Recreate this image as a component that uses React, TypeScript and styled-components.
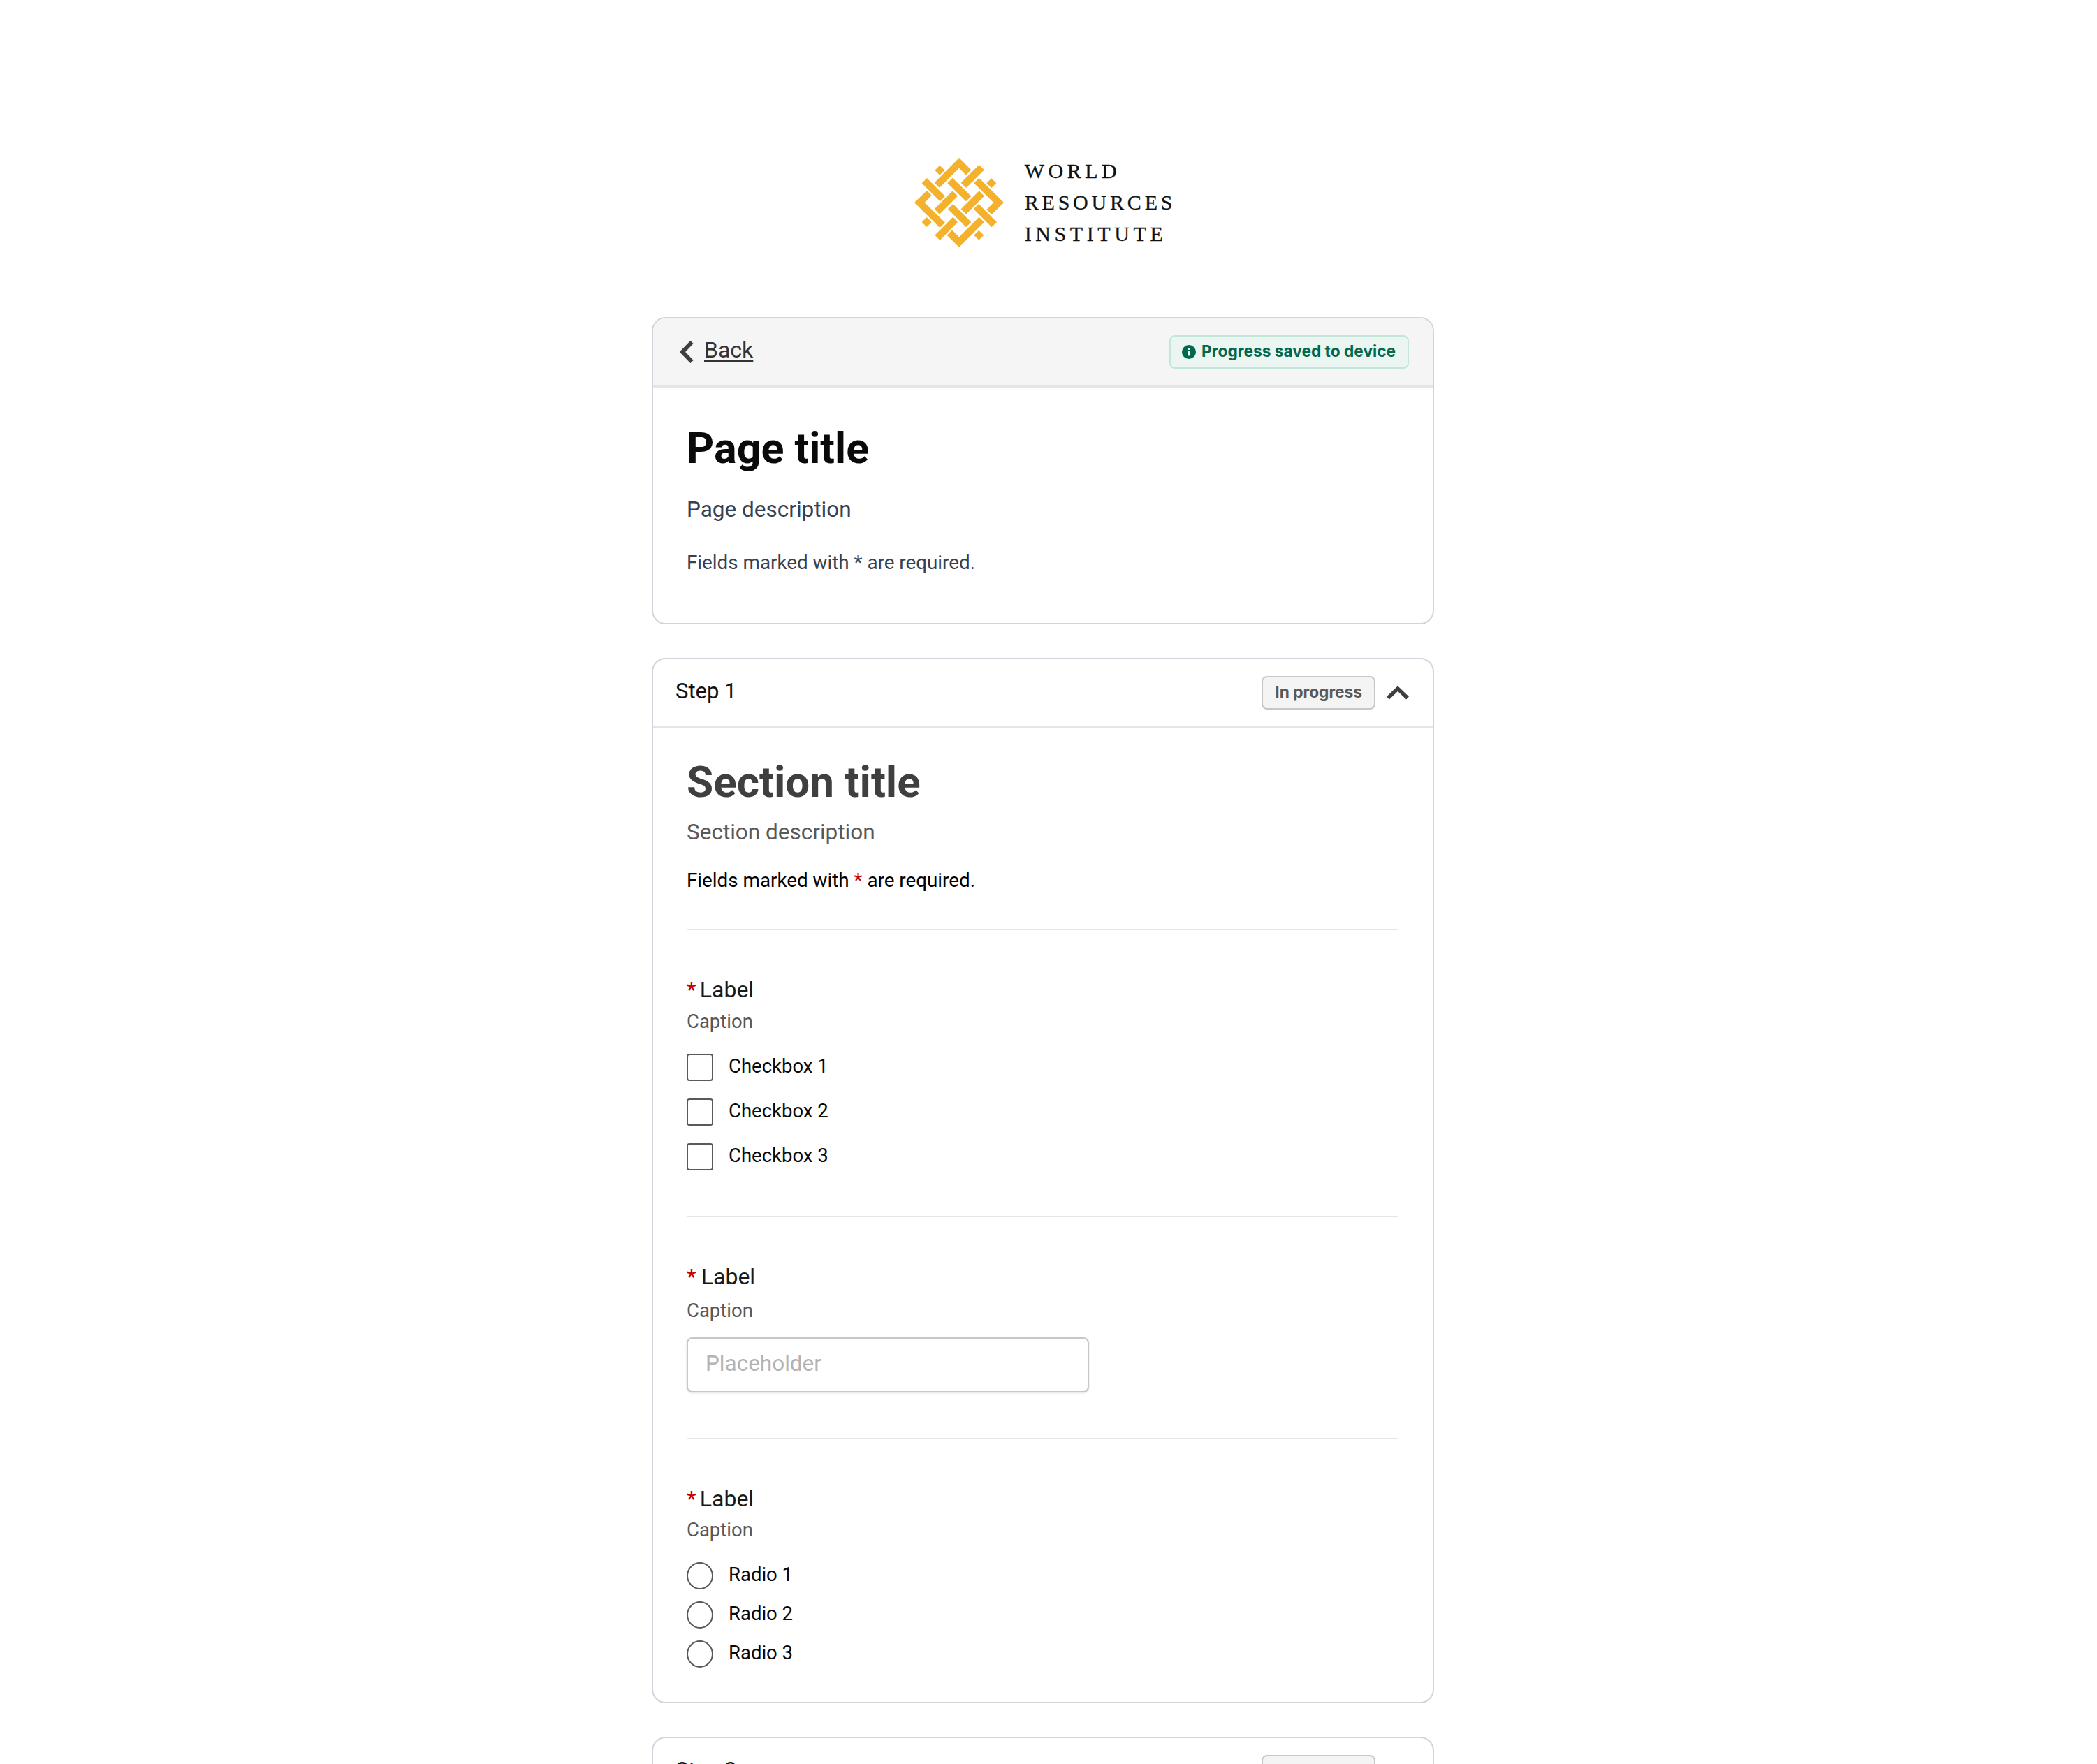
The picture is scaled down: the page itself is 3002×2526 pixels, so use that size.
import { JSX } from 'react';
import styled, { createGlobalStyle } from 'styled-components';

const GlobalStyle = createGlobalStyle`
  html, body {
    margin: 0;
    padding: 0;
    background: #fff;
    overflow: hidden;
  }
  * { box-sizing: border-box; }
`;

const LOGO_SHAPES = [
  '104,125 210,18 262,70 240,92 210,62 126,146',
  '106,72 127,50 148,71 127,92',
  '218,125 296,48 318,70 240,147',
  '328,127 349,106 370,127 349,148',
  '50,127 72,105 150,183 128,205',
  '160,127 182,104 262,183 240,205',
  '274,127 296,104 402,210 350,262 328,240 358,210',
  '104,238 182,160 204,182 126,260',
  '218,238 296,160 318,182 240,260',
  '18,210 72,158 92,180 62,210 150,296 127,318',
  '162,238 184,216 262,294 240,316',
  '272,238 294,216 372,294 350,316',
  '50,294 71,273 92,294 71,315',
  '106,350 184,272 204,294 128,372',
  '158,350 180,328 210,358 296,272 318,294 210,402',
  '274,350 295,329 316,350 295,371',
];

function LogoMark(): JSX.Element {
  return (
    <svg width="140" height="140" viewBox="0 0 420 420">
      {LOGO_SHAPES.map((points) => (
        <polygon key={points} points={points} fill="#f4b12b" />
      ))}
    </svg>
  );
}

function BackIcon(): JSX.Element {
  return (
    <svg width="20" height="32" viewBox="0 0 20 32">
      <polyline points="17.5,2 4,16 17.5,30" fill="none" stroke="#3f3f3f" strokeWidth="6" />
    </svg>
  );
}

function CollapseIcon(): JSX.Element {
  return (
    <svg width="32" height="20" viewBox="0 0 32 20">
      <polyline points="2,17.5 16,4 30,17.5" fill="none" stroke="#3f3f3f" strokeWidth="5.5" />
    </svg>
  );
}

function InfoIcon(): JSX.Element {
  return (
    <svg width="20" height="20" viewBox="0 0 20 20">
      <circle cx="10" cy="10" r="10" fill="#00694e" />
      <rect x="8.6" y="4.4" width="2.8" height="2.6" fill="#fff" />
      <rect x="8.6" y="8.4" width="2.8" height="7" fill="#fff" />
    </svg>
  );
}

interface StepProps {
  name: string;
  children?: React.ReactNode;
}

function Step({ name, children }: StepProps): JSX.Element {
  return (
    <Card>
      <StepHeader>
        <StepName>{name}</StepName>
        <StatusPill>In progress</StatusPill>
        <CollapseIcon />
      </StepHeader>
      {children}
    </Card>
  );
}

export default function App(): JSX.Element {
  return (
    <Page>
      <GlobalStyle />
      <Logo>
        <LogoMark />
        <LogoText>
          <LogoLine $spacing={5.5}>WORLD</LogoLine>
          <LogoLine $spacing={4.8}>RESOURCES</LogoLine>
          <LogoLine $spacing={5.6}>INSTITUTE</LogoLine>
        </LogoText>
      </Logo>

      <Card>
        <TopBar>
          <BackLink>
            <BackIcon />
            <u>Back</u>
          </BackLink>
          <SavedPill>
            <InfoIcon />
            <PillText>Progress saved to device</PillText>
          </SavedPill>
        </TopBar>
        <Intro>
          <PageTitle>Page title</PageTitle>
          <PageDescription>Page description</PageDescription>
          <RequiredNote>Fields marked with * are required.</RequiredNote>
        </Intro>
      </Card>

      <Step name="Step 1">
        <SectionBody>
          <SectionTitle>Section title</SectionTitle>
          <SectionDescription>Section description</SectionDescription>
          <SectionNote>
            Fields marked with <Star>*</Star> are required.
          </SectionNote>
          <Divider $top={51} />

          <FieldLabel $top={65}>
            <Star>*</Star>
            <LabelText>Label</LabelText>
          </FieldLabel>
          <Caption $top={8}>Caption</Caption>
          <OptionList $gap={25}>
            {['Checkbox 1', 'Checkbox 2', 'Checkbox 3'].map((option) => (
              <Option key={option}>
                <CheckBox type="checkbox" />
                <OptionText>{option}</OptionText>
              </Option>
            ))}
          </OptionList>
          <Divider $top={65} />

          <FieldLabel $top={65}>
            <Star>*</Star>
            <LabelText $wide>Label</LabelText>
          </FieldLabel>
          <Caption $top={11}>Caption</Caption>
          <TextField placeholder="Placeholder" />
          <Divider $top={65} />

          <FieldLabel $top={65}>
            <Star>*</Star>
            <LabelText>Label</LabelText>
          </FieldLabel>
          <Caption $top={7}>Caption</Caption>
          <OptionList $gap={17}>
            {['Radio 1', 'Radio 2', 'Radio 3'].map((option) => (
              <Option key={option}>
                <RadioButton type="radio" name="radio" />
                <OptionText>{option}</OptionText>
              </Option>
            ))}
          </OptionList>
        </SectionBody>
      </Step>

      <Step name="Step 2" />
    </Page>
  );
}

const Page = styled.div`
  width: 1120px;
  margin: 0 auto;
  position: relative;
  left: -8px;
  padding-top: 220px;
  height: 2526px;
  overflow: hidden;
  display: flex;
  flex-direction: column;
  gap: 48px;
  font-family: Roboto, sans-serif;
  color: #000;
`;

const Logo = styled.div`
  display: flex;
  align-items: center;
  justify-content: center;
  gap: 24px;
  height: 140px;
  margin-bottom: 46px;
`;

const LogoText = styled.div`
  display: flex;
  flex-direction: column;
  font-family: 'Liberation Serif', serif;
  font-size: 30px;
  line-height: 45px;
  color: #111;
  margin-bottom: 2px;
  -webkit-text-stroke: 0.3px #111;
`;

const LogoLine = styled.span<{ $spacing: number }>`
  letter-spacing: ${({ $spacing }) => $spacing}px;
`;

const Card = styled.section`
  flex: none;
  border: 2px solid #d1d5db;
  border-radius: 20px;
  overflow: hidden;
  background: #fff;
`;

const TopBar = styled.div`
  height: 100px;
  display: flex;
  align-items: center;
  justify-content: space-between;
  padding: 0 34px 0 38px;
  background: #f5f5f5;
  border-bottom: 4px solid #e5e5e5;
`;

const BackLink = styled.a`
  display: flex;
  align-items: center;
  gap: 15px;
  font-size: 32px;
  line-height: 40px;
  color: #333;
  u {
    position: relative;
    top: -3px;
    text-underline-offset: 3px;
  }
`;

const SavedPill = styled.div`
  height: 48px;
  display: flex;
  align-items: center;
  gap: 8px;
  padding: 0 17px 0 16px;
  background: #ebf5f1;
  border: 2px solid #c4e5da;
  border-radius: 8px;
  font-family: Inter, sans-serif;
  font-weight: 700;
  font-size: 22.7px;
  color: #00694e;
`;

const PillText = styled.span`
  padding-bottom: 3px;
`;

const Intro = styled.div`
  padding: 50px 50px 68px 48px;
`;

const PageTitle = styled.h1`
  margin: 0;
  font-size: 61px;
  line-height: 72px;
  font-weight: 700;
  color: #0a0a0a;
`;

const PageDescription = styled.p`
  margin: 32px 0 0;
  font-size: 31.5px;
  line-height: 40px;
  color: #374151;
`;

const RequiredNote = styled.p`
  margin: 38px 0 0;
  font-size: 27.8px;
  line-height: 36px;
  color: #374151;
`;

const StepHeader = styled.div`
  height: 98px;
  display: flex;
  align-items: center;
  padding: 0 34px 0 32px;
  border-bottom: 2px solid #e5e5e5;
`;

const StepName = styled.span`
  flex: 1;
  font-size: 31px;
  line-height: 40px;
  color: #111;
  position: relative;
  top: -2px;
`;

const StatusPill = styled.span`
  height: 48px;
  display: flex;
  align-items: center;
  margin-right: 16px;
  padding: 0 17px 3px;
  background: #f4f4f4;
  border: 2px solid #c7c7c7;
  border-radius: 8px;
  font-family: Inter, sans-serif;
  font-weight: 700;
  font-size: 22.7px;
  color: #595959;
`;

const SectionBody = styled.div`
  padding: 42px 50px 49px 48px;
  display: flex;
  flex-direction: column;
  align-items: flex-start;
`;

const SectionTitle = styled.h2`
  margin: 0;
  font-size: 62px;
  line-height: 72px;
  font-weight: 700;
  color: #3f3f3f;
`;

const SectionDescription = styled.p`
  margin: 16px 0 0;
  font-size: 31.5px;
  line-height: 40px;
  color: #595959;
`;

const SectionNote = styled.p`
  margin: 31px 0 0;
  font-size: 27.8px;
  line-height: 36px;
  color: #000;
`;

const Star = styled.span`
  color: #c70000;
`;

const Divider = styled.hr<{ $top: number }>`
  width: 100%;
  height: 2px;
  margin: ${({ $top }) => $top}px 0 0;
  border: 0;
  background: #e5e5e5;
`;

const FieldLabel = styled.div<{ $top: number }>`
  display: flex;
  margin-top: ${({ $top }) => $top}px;
  font-size: 32px;
  line-height: 40px;
  color: #1a1a1a;
`;

const LabelText = styled.span<{ $wide?: boolean }>`
  margin-left: ${({ $wide }) => ($wide ? 7 : 5)}px;
`;

const Caption = styled.div<{ $top: number }>`
  margin-top: ${({ $top }) => $top}px;
  font-size: 27.5px;
  line-height: 36px;
  color: #595959;
`;

const OptionList = styled.div<{ $gap: number }>`
  display: flex;
  flex-direction: column;
  gap: ${({ $gap }) => $gap}px;
  margin-top: 28px;
`;

const Option = styled.label`
  display: flex;
  align-items: center;
  gap: 22px;
  height: 39px;
`;

const OptionText = styled.span`
  font-size: 27.5px;
  line-height: 36px;
  color: #0a0a0a;
  padding-bottom: 4px;
`;

const CheckBox = styled.input`
  appearance: none;
  width: 38px;
  height: 39px;
  margin: 0;
  background: #fff;
  border: 2px solid #595959;
  border-radius: 4px;
`;

const RadioButton = styled(CheckBox)`
  border-radius: 50%;
`;

const TextField = styled.input`
  width: 576px;
  height: 79px;
  margin-top: 20px;
  padding: 0 25px 4px;
  background: #fff;
  border: 2px solid #c7c7c7;
  border-radius: 8px;
  box-shadow: 0 1px 3px rgba(0, 0, 0, 0.12);
  font-family: Roboto, sans-serif;
  font-size: 31.5px;
  &::placeholder {
    color: #b3b3b3;
    opacity: 1;
  }
`;
